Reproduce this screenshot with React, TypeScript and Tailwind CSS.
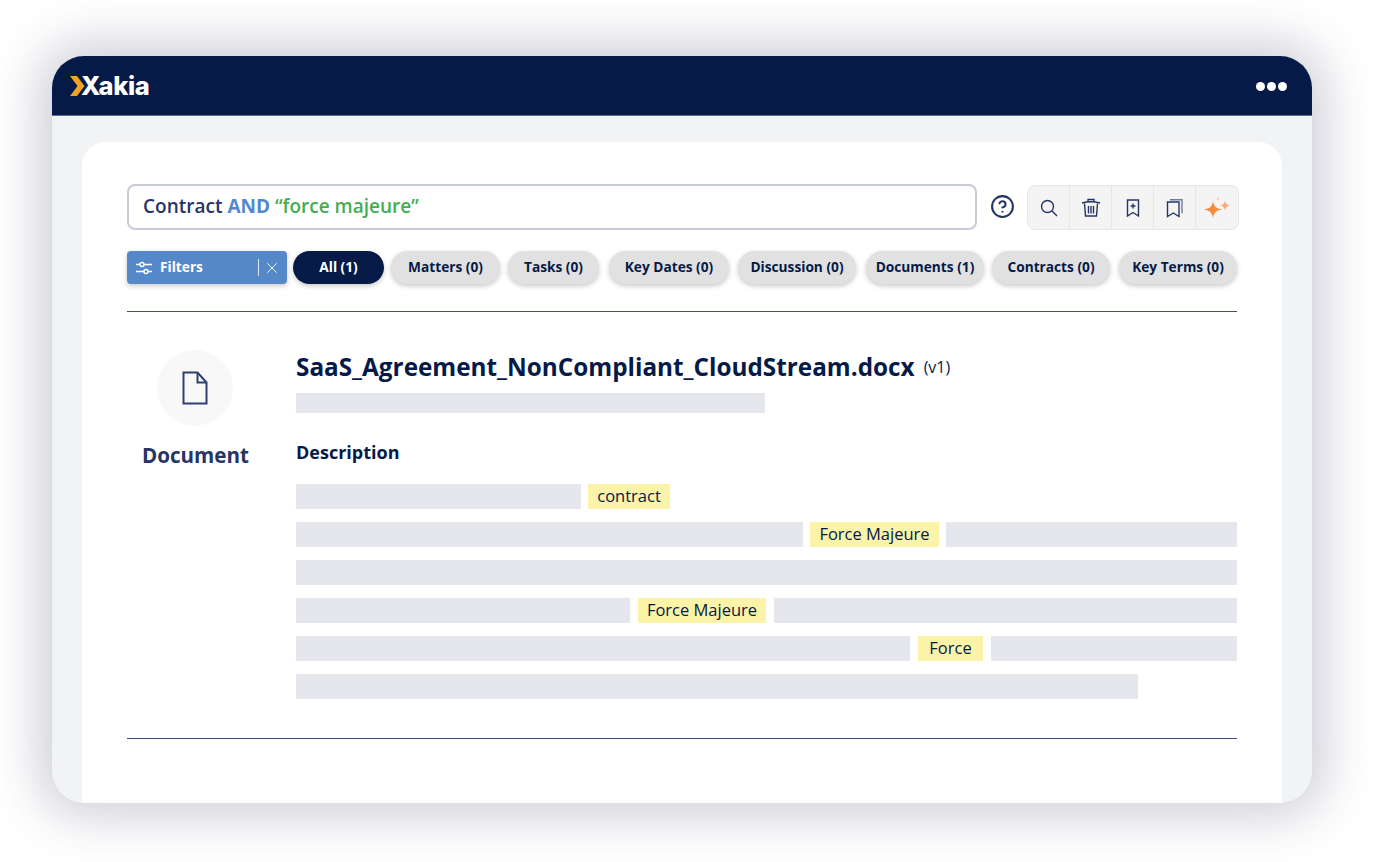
import { X, HelpCircle } from "lucide-react";

const pills = [
  { label: "Matters (0)", w: "ml-[7px] w-[109px]" },
  { label: "Tasks (0)", w: "ml-[8px] w-[91px]" },
  { label: "Key Dates (0)", w: "ml-[10px] w-[120px]" },
  { label: "Discussion (0)", w: "ml-[9px] w-[118px]" },
  { label: "Documents (1)", w: "ml-[10px] w-[118px]" },
  { label: "Contracts (0)", w: "ml-[8px] w-[118px]" },
  { label: "Key Terms (0)", w: "ml-[9px] w-[118px]" },
];

function Bar({ className }: { className: string }) {
  return <div className={`h-[25px] bg-[#e6e7ec] ${className}`} />;
}

function Tag({ text, className }: { text: string; className: string }) {
  return (
    <div className={`flex h-[25px] shrink-0 items-center justify-center bg-[#faf3a8] pb-[1px] text-[16.5px] text-[#061a47] ${className}`}>
      {text}
    </div>
  );
}

function ToolCell({ children, last }: { children: React.ReactNode; last?: boolean }) {
  return (
    <div className={`flex h-full w-[42px] items-center justify-center pt-[2px] ${last ? "" : "border-r border-[#e7e7e9]"}`}>
      {children}
    </div>
  );
}

export default function App() {
  return (
    <div className="h-[862px] w-[1377px] overflow-hidden bg-white pl-[52px] pt-[56px] font-['Open_Sans','Noto_Sans',sans-serif] text-[#061a47]">
      <div className="flex h-[747px] w-[1260px] flex-col overflow-hidden rounded-[32px] bg-[#f2f3f5] shadow-[0_0_50px_12px_rgba(40,44,84,0.24)]">
        <header className="flex h-[60px] shrink-0 items-center justify-between border-b border-[#5a6a90] bg-[#061a47] pl-[18px] pr-[25px]">
          <div className="flex items-center">
            <svg width="18" height="20" viewBox="0 0 18 20" className="mt-[1px]">
              <path d="M0 0h7l7.500 10L7 20H0l7.500-10z" fill="#f4a223" />
            </svg>
            <span className="-ml-[7px] font-['Inter',sans-serif] text-[25.5px] leading-none font-extrabold tracking-[-0.4px] text-white">Xakia</span>
          </div>
          <div className="mt-[2px] flex gap-[2px]">
            <span className="h-[9px] w-[9px] rounded-full bg-white" />
            <span className="h-[9px] w-[9px] rounded-full bg-white" />
            <span className="h-[9px] w-[9px] rounded-full bg-white" />
          </div>
        </header>

        <div className="flex-1 px-[30px] pt-[26px]">
          <main className="h-full w-[1200px] rounded-t-[24px] bg-white px-[45px] pt-[42px]">
            <div className="flex h-[46px] items-center">
              <div className="flex h-[46px] w-[850px] shrink-0 items-center rounded-[8px] border-2 border-[#c8ccd6] pb-[2px] pl-[14px] text-[19px] font-semibold">
                <span className="text-[#263566]">Contract</span>
                <span className="ml-[5px] font-bold text-[#5588c8]">AND</span>
                <span className="ml-[5px] text-[#45ad52]">“force majeure”</span>
              </div>
              <HelpCircle className="ml-[13px] h-[25px] w-[25px] shrink-0 -translate-y-[1px] text-[#263566]" strokeWidth={2} />
              <div className="ml-[12px] flex h-[45px] w-[212px] shrink-0 items-center rounded-[8px] border border-[#e7e7e9] bg-[#f4f4f5]">
                <ToolCell>
                  <svg width="18" height="18" viewBox="0 0 18 18" fill="none" stroke="#263566" strokeWidth="1.400">
                    <circle cx="7.500" cy="7.500" r="6" />
                    <path d="M12 12l5 5" />
                  </svg>
                </ToolCell>
                <ToolCell>
                  <svg width="20" height="20" viewBox="0 0 20 20" fill="none" stroke="#263566" strokeWidth="1.400">
                    <path d="M1 5c5-1.400 13-1.400 18 0" />
                    <path d="M7 3.800V1.500h6v2.300" />
                    <path d="M3.500 5.500l1 12.500h11l1-12.500" />
                    <path d="M7.500 8v7.500M10 8v7.500M12.500 8v7.500" />
                  </svg>
                </ToolCell>
                <ToolCell>
                  <svg width="14" height="18" viewBox="0 0 14 18" fill="none" stroke="#263566" strokeWidth="1.400">
                    <path d="M1.500 1h11v16L7 13.500 1.500 17z" />
                    <path d="M7 4.500v5M4.500 7h5" />
                  </svg>
                </ToolCell>
                <ToolCell>
                  <svg width="20" height="20" viewBox="0 0 20 20" fill="none" stroke="#263566" strokeWidth="1.400">
                    <path d="M2.500 4h11.500v14.500l-5.700-3.500-5.800 3.500z" />
                    <path d="M5 1.800h12v13.500" stroke="#6f7a99" />
                  </svg>
                </ToolCell>
                <ToolCell last>
                  <svg width="28" height="24" viewBox="0 0 28 24">
                    <path d="M10 5c1 5.500 3 7.500 9 8.500-6 1-8 3-9 8.500-1-5.500-3-7.500-9-8.500 6-1 8-3 9-8.500z" fill="#f98b3c" />
                    <path d="M22 4.500c.5 3 1.900 4.500 5 5-3.100.5-4.500 2-5 5-.5-3-1.900-4.500-5-5 3.100-.5 4.500-2 5-5z" fill="#fba873" />
                    <path d="M15 1c.2 1.300.7 1.800 2 2-1.300.2-1.800.7-2 2-.2-1.300-.7-1.800-2-2 1.300-.2 1.800-.7 2-2z" fill="#fcc9a6" />
                  </svg>
                </ToolCell>
              </div>
            </div>

            <div className="mt-[21px] flex h-[33px] items-center text-[13.7px] font-bold">
              <div className="flex h-full w-[160px] items-center rounded-[4px] bg-[#5588c8] pl-[9px] pr-[6px] text-white shadow-[0_2px_5px_rgba(0,0,0,0.22)]">
                <svg width="16" height="14" viewBox="0 0 16 14" fill="none" stroke="currentColor" strokeWidth="1.400">
                  <path d="M0 3.500h4M8 3.500h8M0 10.500h8M12 10.500h4" />
                  <circle cx="6" cy="3.500" r="2" />
                  <circle cx="10" cy="10.500" r="2" />
                </svg>
                <span className="ml-[8px] flex-1">Filters</span>
                <span className="h-[17px] w-px bg-white/80" />
                <X className="ml-[4px] h-[18px] w-[18px]" strokeWidth={1.2} />
              </div>
              <div className="ml-[6px] flex h-full w-[91px] items-center justify-center rounded-full bg-[#061a47] text-white shadow-[0_2px_5px_rgba(0,0,0,0.22)]">All (1)</div>
              {pills.map((p) => (
                <div key={p.label} className={`flex h-full items-center justify-center rounded-full bg-[#e1e1e1] shadow-[0_2px_5px_rgba(0,0,0,0.22)] ${p.w}`}>
                  {p.label}
                </div>
              ))}
            </div>

            <div className="mt-[27px] h-px bg-[#3d4f85]" />

            <section className="flex pt-[38px]">
              <div className="flex w-[169px] shrink-0 flex-col">
                <div className="ml-[30px] flex h-[76px] w-[76px] items-center justify-center rounded-full bg-[#f8f8f8]">
                  <svg width="26" height="34" viewBox="0 0 26 34" fill="none" stroke="#2f4070" strokeWidth="2">
                    <path d="M1.500 1.500h14l9 10v21h-23z" />
                    <path d="M15.500 1.500v10h9" />
                  </svg>
                </div>
                <div className="mt-[14px] w-[137px] text-center text-[20.6px] leading-[30px] font-bold text-[#263566]">Document</div>
              </div>
              <div className="min-w-0 flex-1">
                <div className="-mt-[1px] flex h-[36px] items-center">
                  <span className="text-[24.3px] font-bold whitespace-nowrap">SaaS_Agreement_NonCompliant_CloudStream.docx</span>
                  <span className="ml-[9px] text-[16px]">(v1)</span>
                </div>
                <div className="mt-[8px] h-[20px] w-[469px] bg-[#e6e7ec]" />
                <div className="mt-[25px] text-[18px] leading-[28px] font-bold">Description</div>
                <div className="mt-[18px] flex flex-col gap-[13px]">
                  <div className="flex gap-[7px]">
                    <Bar className="w-[285px]" />
                    <Tag text="contract" className="w-[82px]" />
                  </div>
                  <div className="flex gap-[7px]">
                    <Bar className="w-[507px]" />
                    <Tag text="Force Majeure" className="w-[129px]" />
                    <Bar className="flex-1" />
                  </div>
                  <Bar className="w-full" />
                  <div className="flex gap-[8px]">
                    <Bar className="w-[334px]" />
                    <Tag text="Force Majeure" className="w-[128px]" />
                    <Bar className="flex-1" />
                  </div>
                  <div className="flex gap-[8px]">
                    <Bar className="w-[614px]" />
                    <Tag text="Force" className="w-[65px]" />
                    <Bar className="flex-1" />
                  </div>
                  <Bar className="w-[842px]" />
                </div>
              </div>
            </section>

            <div className="mt-[39px] h-px bg-[#3d4f85]" />
          </main>
        </div>
      </div>
    </div>
  );
}
